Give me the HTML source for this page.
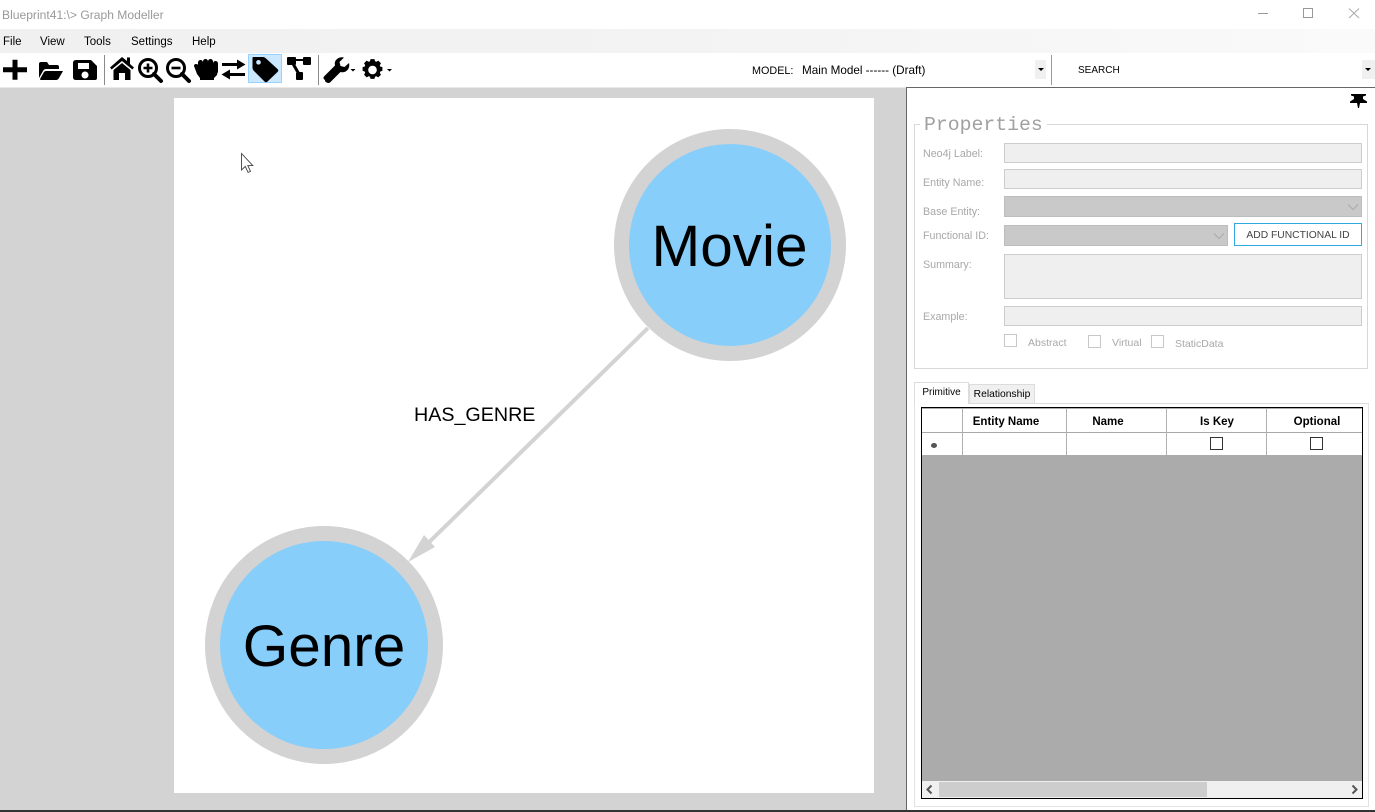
<!DOCTYPE html>
<html><head><meta charset="utf-8"><style>
html,body{margin:0;padding:0;width:1375px;height:812px;overflow:hidden;background:#fff}
body{font-family:"Liberation Sans",sans-serif;position:relative}
.a{position:absolute;white-space:nowrap}
.l{position:absolute;white-space:nowrap;font-size:10.7px;color:#a8a8a8;line-height:14px}
.m{position:absolute;top:35px;font-size:11.5px;color:#000;line-height:14px}
.t{position:absolute;background:#efefef;border:1px solid #cdcdcd;box-sizing:border-box}
.c{position:absolute;background:#c9c9c9;border:1px solid #bdbdbd;box-sizing:border-box}
.cb{position:absolute;width:13px;height:13px;border:1px solid #c8c8c8;box-sizing:border-box}
.h{position:absolute;top:415px;font-size:11.5px;font-weight:bold;line-height:14px;color:#000;text-align:center}
.k{position:absolute;top:437px;width:13px;height:13px;border:1px solid #333;box-sizing:border-box}
</style></head><body>
<!-- title bar -->
<div class="a" style="left:2px;top:8px;font-size:12.1px;line-height:14px;color:#999">Blueprint41:\&gt; Graph Modeller</div>
<svg class="a" style="left:1250px;top:0" width="125" height="29" fill="none" stroke="#999" stroke-width="1">
<path d="M8 13.500H18"/><rect x="53.500" y="8.500" width="9" height="9"/><path d="M99 8.500L109 18M109 8.500L99 18" stroke="#aaa"/></svg>
<!-- menu -->
<div class="a" style="left:0;top:29px;width:1375px;height:24px;background:linear-gradient(90deg,#f0f0f0 0,#f3f3f3 50%,#fafafa 100%)"></div>
<div class="m" style="left:3px">File</div><div class="m" style="left:40px">View</div><div class="m" style="left:84px">Tools</div><div class="m" style="left:131px">Settings</div><div class="m" style="left:192px">Help</div>
<!-- toolbar -->
<div class="a" style="left:248px;top:54px;width:34px;height:29px;background:#cce8ff;border:1px solid #99d1ff;box-sizing:border-box"></div>
<svg class="a" style="left:0;top:53px" width="400" height="34" fill="#000">
<path d="M12.500 7h5v7.500H27v5h-9.500V27h-5v-7.500H3v-5h9.500z" transform="translate(0,-.2)"/>
<path d="M39 25V11q0-2 2-2h6l2 3h8q2 0 2 2v2H46q-2 0-3 2zM46 18H63l-4 7q-1 2-3 2H41q-1 0-1-1l4-7q1-1 2-1z"/>
<path fill-rule="evenodd" d="M76 7H91l6 6v12q0 2-2 2H76q-3 0-3-3V10q0-3 3-3zM78 10v6h11v-6zM85 18.500a3.500 3.500 0 1 0 .01 0z"/>
<rect x="104" y="2" width="1" height="30" fill="#8a8a8a"/>
<path d="M122 4l5 4V4.500h3v6.500l4 3.500-1.700 2L122 8l-10.300 8.500-1.700-2zM113.500 17L122 10l8.500 7v10H125v-7h-6v7h-5.500z"/>
<g fill="none" stroke="#000"><circle cx="148" cy="15" r="8.500" stroke-width="3"/><path d="M154 21l7 7" stroke-width="4" stroke-linecap="round"/><path d="M148 10.500v9M143.500 15h9" stroke-width="2.600"/>
<circle cx="176" cy="15" r="8.500" stroke-width="3"/><path d="M182 21l7 7" stroke-width="4" stroke-linecap="round"/><path d="M171.500 15h9" stroke-width="2.600"/></g>
<!-- hand -->
<rect x="198" y="7" width="5" height="14" rx="2.500"/><rect x="203" y="6" width="5" height="14" rx="2.500"/><rect x="208" y="6" width="5" height="14" rx="2.500"/><rect x="213" y="8" width="5" height="13" rx="2.500"/>
<path d="M194 13q0-2 2-2t3 2l1 5h17.500l-.5 4-3 3v2h-14v-2l-3-4z"/>
<!-- arrows -->
<path d="M222 10h15V6.500l8.500 5-8.500 5V13H222zM245 20H230v-3.500l-8.500 5 8.500 5V23H245z"/>
<!-- tag -->
<path fill-rule="evenodd" d="M253 4h10q1.500 0 3 1.500L277.500 16q1.500 1.500 0 3l-10 9.500q-1.500 1.500-3 0L254 18q-1.500-1.500-1.500-3V5q0-1 .5-1zM258.500 7a2.300 2.300 0 1 0 .01 0z"/>
<!-- network -->
<rect x="287" y="4" width="9" height="8" rx="1"/><rect x="303" y="4" width="8" height="8" rx="1"/><rect x="296" y="19" width="7" height="8" rx="1"/>
<path d="M296 6h7v2h-7zM292 12h3.500l4 7h-3.500z"/>
<rect x="318" y="2" width="1" height="30" fill="#8a8a8a"/>
<!-- wrench -->
<path d="M325 26q-2.500-1.500-1-3.500l11-11q-1-4 2-6.500 3-2.500 7-1.500l-4.500 4.500 1 4 4 1 4.500-4q1 4-1.500 7-3 3-7 2l-10.500 10.500q-2.500 1.500-5-1.500z" fill-rule="evenodd" transform="translate(0,1)"/>
<path d="M350.500 16h5l-2.500 2.500zM387 16h5l-2.500 2.500z"/>
<!-- gear -->
<path fill-rule="evenodd" transform="translate(372.500,17) scale(.66) translate(-375,-16.500)" d="M372 0h6l.8 3.200 2 .8 3-1.700 4 4-1.700 3 .8 2 3.100.8v5.800l-3.100.8-.8 2 1.700 3-4 4-3-1.700-2 .8-.8 3.200h-6l-.8-3.200-2-.8-3 1.700-4-4 1.700-3-.8-2-3.100-.8v-5.800l3.100-.8.800-2-1.700-3 4-4 3 1.700 2-.8zM375 10a6.500 6.500 0 1 0 .01 0z" transform-origin="0 0"/>
</svg>
<div class="a" style="left:752px;top:64px;font-size:10.8px;line-height:14px;color:#000">MODEL:</div>
<div class="a" style="left:802px;top:64px;font-size:11.700px;line-height:14px;color:#000">Main Model ------ (Draft)</div>
<div class="a" style="left:1035px;top:60px;width:11px;height:19px;background:#f0f0f0"></div>
<div class="a" style="left:1038px;top:68px;width:0;height:0;border:3px solid transparent;border-top:3px solid #000"></div>
<div class="a" style="left:1051px;top:55px;width:1px;height:30px;background:#999"></div>
<div class="a" style="left:1078px;top:64px;font-size:10px;line-height:14px;color:#000">SEARCH</div>
<div class="a" style="left:1362px;top:60px;width:13px;height:19px;background:#f0f0f0"></div>
<div class="a" style="left:1365px;top:68px;width:0;height:0;border:3px solid transparent;border-top:3px solid #000"></div>
<!-- main canvas -->
<div class="a" style="left:0;top:87px;width:906px;height:723px;background:#d3d3d3;border-top:1px solid #e8e8e8;box-sizing:border-box"></div>
<svg class="a" style="left:174px;top:98px" width="700" height="695">
<rect width="700" height="695" fill="#fff"/>
<circle cx="556" cy="147" r="108.500" fill="#87cefa" stroke="#d3d3d3" stroke-width="15"/>
<circle cx="150" cy="547" r="111.500" fill="#87cefa" stroke="#d3d3d3" stroke-width="15"/>
<path d="M474 230L243 456" stroke="#d3d3d3" stroke-width="4"/>
<path d="M234 464L250 437 261 449z" fill="#d3d3d3"/>
<text x="555.500" y="168" font-family="Liberation Sans" font-size="58.500" text-anchor="middle" fill="#000">Movie</text>
<text x="150" y="568" font-family="Liberation Sans" font-size="58.500" text-anchor="middle" fill="#000">Genre</text>
<text x="240" y="323" font-family="Liberation Sans" font-size="19.700" fill="#000">HAS_GENRE</text>
<path d="M67.500 55.500v16.500l3.800-3.600 2.800 6 2.400-1-2.700-5.800h5z" fill="#fff" stroke="#444" stroke-width=".9"/>
</svg>
<!-- right panel -->
<div class="a" style="left:906px;top:87px;width:469px;height:723px;background:#fff;border-left:1px solid #666;border-top:1px solid #666;box-sizing:border-box"></div>
<svg class="a" style="left:1349px;top:92px" width="20" height="16" fill="#000"><path d="M2 2h15v1.500l-3 1V7l4 2.500V11H11l-1 5H9l-1-5H1V9.500L5 7V4.500l-3-1z"/></svg>
<div class="a" style="left:914px;top:124px;width:454px;height:245px;border:1px solid #d8d8d8;box-sizing:border-box"></div>
<div class="a" style="left:920px;top:114px;padding:0 4px;background:#fff;font-family:'Liberation Mono',monospace;font-size:19.800px;line-height:23px;color:#a0a0a0">Properties</div>
<div class="l" style="left:923px;top:147px">Neo4j Label:</div>
<div class="t" style="left:1004px;top:143px;width:358px;height:20px"></div>
<div class="l" style="left:923px;top:176px">Entity Name:</div>
<div class="t" style="left:1004px;top:169px;width:358px;height:20px"></div>
<div class="l" style="left:923px;top:205px">Base Entity:</div>
<div class="c" style="left:1004px;top:196px;width:358px;height:21px"></div>
<svg class="a" style="left:1347px;top:203px" width="12" height="8" fill="none" stroke="#aaa"><path d="M1 1.500l5 5 5-5"/></svg>
<div class="l" style="left:923px;top:229px">Functional ID:</div>
<div class="c" style="left:1004px;top:225px;width:224px;height:21px"></div>
<svg class="a" style="left:1213px;top:232px" width="12" height="8" fill="none" stroke="#aaa"><path d="M1 1.500l5 5 5-5"/></svg>
<div class="a" style="left:1234px;top:223px;width:128px;height:23px;border:1px solid #2eaadc;box-sizing:border-box;font-size:10.300px;line-height:23px;text-align:center;color:#444">ADD FUNCTIONAL ID</div>
<div class="l" style="left:923px;top:258px">Summary:</div>
<div class="t" style="left:1004px;top:254px;width:358px;height:45px"></div>
<div class="l" style="left:923px;top:310px">Example:</div>
<div class="t" style="left:1004px;top:306px;width:358px;height:20px"></div>
<div class="cb" style="left:1004px;top:334px"></div><div class="l" style="left:1028px;top:336px;font-size:10.500px">Abstract</div>
<div class="cb" style="left:1088px;top:335px"></div><div class="l" style="left:1112px;top:336px;font-size:10.500px">Virtual</div>
<div class="cb" style="left:1151px;top:335px"></div><div class="l" style="left:1175px;top:337px;font-size:10.500px">StaticData</div>
<!-- tabs -->
<div class="a" style="left:914px;top:382px;width:55px;height:22px;background:#fff;border:1px solid #dcdcdc;border-bottom:0;box-sizing:border-box;font-size:10px;line-height:20px;text-align:center;color:#000">Primitive</div>
<div class="a" style="left:969px;top:384px;width:66px;height:20px;background:#f0f0f0;border:1px solid #dcdcdc;border-bottom:0;box-sizing:border-box;font-size:10.300px;line-height:20px;text-align:center;color:#000">Relationship</div>
<div class="a" style="left:914px;top:403px;width:455px;height:404px;border:1px solid #e2e2e2;border-top:1px solid #dcdcdc;box-sizing:border-box"></div>
<div class="a" style="left:915px;top:403px;width:53px;height:1px;background:#fff"></div>
<!-- grid -->
<div class="a" style="left:921px;top:407px;width:442px;height:392px;background:#ababab;border:1px solid #000;box-sizing:border-box"></div>
<div class="a" style="left:922px;top:409px;width:440px;height:46px;background:#fff"></div>
<div class="a" style="left:922px;top:432px;width:440px;height:1px;background:#a8a8a8"></div>
<div class="a" style="left:962px;top:409px;width:1px;height:46px;background:#b0b0b0"></div>
<div class="a" style="left:1066px;top:409px;width:1px;height:46px;background:#b0b0b0"></div>
<div class="a" style="left:1166px;top:409px;width:1px;height:46px;background:#b0b0b0"></div>
<div class="a" style="left:1266px;top:409px;width:1px;height:46px;background:#b0b0b0"></div>
<div class="h" style="left:963px;width:86px">Entity Name</div>
<div class="h" style="left:1067px;width:82px">Name</div>
<div class="h" style="left:1167px;width:100px">Is Key</div>
<div class="h" style="left:1267px;width:100px">Optional</div>
<div class="a" style="left:931px;top:443px;width:6px;height:5px;border-radius:50%;background:#555"></div>
<div class="k" style="left:1210px"></div>
<div class="k" style="left:1310px"></div>
<!-- scrollbar -->
<div class="a" style="left:922px;top:781px;width:440px;height:17px;background:#f0f0f0"></div>
<div class="a" style="left:939px;top:782px;width:268px;height:15px;background:#cdcdcd"></div>
<svg class="a" style="left:925px;top:784px" width="12" height="11" fill="none" stroke="#555" stroke-width="2"><path d="M6.500 1.500L2.500 5.500l4 4"/></svg>
<svg class="a" style="left:1349px;top:784px" width="12" height="11" fill="none" stroke="#555" stroke-width="2"><path d="M3.500 1.500l4 4-4 4"/></svg>
<!-- bottom edge -->
<div class="a" style="left:0;top:810px;width:1375px;height:2px;background:#333"></div>
</body></html>
